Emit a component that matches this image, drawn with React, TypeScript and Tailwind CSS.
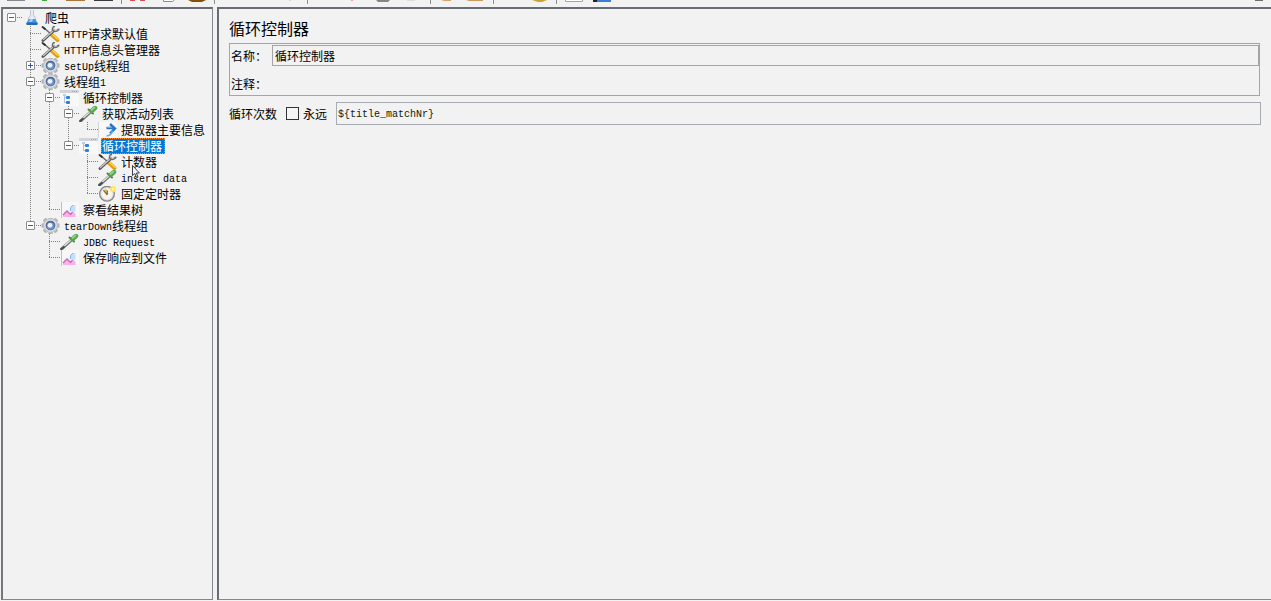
import React, { useState } from 'react';

type IconName = 'flask' | 'tools' | 'gear' | 'loop' | 'dropper' | 'arrow' | 'clock' | 'chart';

interface TreeNode {
  id: string;
  label: string;
  icon: IconName;
  collapsed?: boolean;
  children?: TreeNode[];
}

const plan: TreeNode = {
  id: 'plan',
  label: '爬虫',
  icon: 'flask',
  children: [
    { id: 'http-defaults', label: 'HTTP请求默认值', icon: 'tools' },
    { id: 'http-headers', label: 'HTTP信息头管理器', icon: 'tools' },
    { id: 'setup', label: 'setUp线程组', icon: 'gear', collapsed: true, children: [] },
    {
      id: 'threads',
      label: '线程组1',
      icon: 'gear',
      children: [
        {
          id: 'loop-outer',
          label: '循环控制器',
          icon: 'loop',
          children: [
            {
              id: 'activity',
              label: '获取活动列表',
              icon: 'dropper',
              children: [{ id: 'extract', label: '提取器主要信息', icon: 'arrow' }],
            },
            {
              id: 'loop-inner',
              label: '循环控制器',
              icon: 'loop',
              children: [
                { id: 'counter', label: '计数器', icon: 'tools' },
                { id: 'insert', label: 'insert data', icon: 'dropper' },
                { id: 'timer', label: '固定定时器', icon: 'clock' },
              ],
            },
          ],
        },
        { id: 'results', label: '察看结果树', icon: 'chart' },
      ],
    },
    {
      id: 'teardown',
      label: 'tearDown线程组',
      icon: 'gear',
      children: [
        { id: 'jdbc', label: 'JDBC Request', icon: 'dropper' },
        { id: 'save', label: '保存响应到文件', icon: 'chart' },
      ],
    },
  ],
};

const TreeIcon: React.FC<{ name: IconName }> = ({ name }) => {
  const teeth = [0, 45, 90, 135, 180, 225, 270, 315];
  return (
    <svg width="19" height="16" viewBox="0 0 19 16" className="shrink-0" aria-hidden="true">
      {name === 'flask' && (
        <g>
          <path d="M8 0h4v5l3.500 8q.5 2-1 2h-9q-1.500 0-1-2L8 5z" fill="#e4ebf2" />
          <path d="M8.500 0v5L6 9M11.500 0v5L14 9" fill="none" stroke="#b3c1ce" strokeWidth=".9" />
          <path d="M6.500 9h7l2 4.500q.3 1.500-1 1.500h-9q-1.300 0-1-1.500z" fill="#4a97e0" />
          <path d="M4.800 12.500h10.700v1q0 1.500-1 1.500h-9q-1.300 0-1-1.500z" fill="#1f69be" />
          <path d="M8 9h3l-1 3H7z" fill="#9dcaf4" />
        </g>
      )}
      {name === 'tools' && (
        <g fill="none" strokeLinecap="round">
          <path d="M2.500 1.500 10 8" stroke="#6c6c6c" strokeWidth="1.600" />
          <path d="M1.500 1l2.500 2" stroke="#333" strokeWidth="1.800" />
          <path d="M10.500 8.500 16.500 14" stroke="#dd9f10" strokeWidth="3.800" />
          <path d="M11.500 8.500 17 13.300" stroke="#ffd644" strokeWidth="1.500" />
          <path d="M2 14.500 13 4.500" stroke="#555" strokeWidth="2.800" />
          <path d="M2.500 13.500 12.500 4.500" stroke="#cdcdcd" strokeWidth="1.200" />
          <path d="M13 .5q-2 2-.8 4Q14.500 6.500 17.500 3.500" stroke="#6a6a6a" strokeWidth="2" />
          <path d="M13 1.500q-1 1.700 0 2.500 1.200.9 3 0" stroke="#dadada" strokeWidth=".9" />
        </g>
      )}
      {name === 'gear' && (
        <g>
          {teeth.map((a) => (
            <rect key={a} x="7.300" y="-1.500" width="4.400" height="4" rx="1" fill="#b2b5ba" transform={`rotate(${a} 9.5 7.5)`} />
          ))}
          <circle cx="9.500" cy="7.500" r="7.300" fill="#bfc2c7" />
          <circle cx="9.500" cy="7.500" r="6.300" fill="#dcdee2" />
          <circle cx="9.500" cy="7.500" r="4.800" fill="#4a6690" />
          <circle cx="9.500" cy="8" r="3.800" fill="#6b93c8" />
          <circle cx="9" cy="7.300" r="2.400" fill="#eef5fc" />
        </g>
      )}
      {name === 'loop' && (
        <g>
          <rect width="19" height="16" fill="#f8f8f9" />
          <rect width="19" height="3" fill="#d3d4d7" />
          <path d="M12 1.500h1M14 1.500h1M16 1.500h1" stroke="#a0a2a6" />
          <path d="M4.500 5v8M4.500 7.500h2M4.500 12.500h2" stroke="#a8c4e6" />
          <rect x="3" y="4" width="3" height="2" fill="#b4cfee" />
          <rect x="6" y="6" width="4" height="3" rx="1" fill="#2f80d6" />
          <rect x="6" y="11" width="4" height="3" rx="1" fill="#2f80d6" />
        </g>
      )}
      {name === 'dropper' && (
        <g strokeLinecap="round">
          <path d="M1.500 15 11 6.500" stroke="#6a706a" strokeWidth="3" />
          <path d="M3 13 10.500 6.500" stroke="#e2e7e2" strokeWidth="1.300" />
          <path d="M1.500 15 4 12.800" stroke="#4a4f4a" strokeWidth="1.800" />
          <path d="M9.500 3.500 14 7.500" stroke="#4d8146" strokeWidth="2" />
          <path d="M12.500 5 16 2" stroke="#5aa350" strokeWidth="4.500" />
          <path d="M12.500 4 15.500 1.500" stroke="#98d588" strokeWidth="1.700" />
        </g>
      )}
      {name === 'arrow' && (
        <g>
          <rect width="19" height="16" fill="#f8f8f9" />
          <path d="M.5 0v16" stroke="#d3d4d6" />
          <path d="M8.500 6h7M12 2 17 6.500 12 11.500" fill="none" stroke="#2277cc" strokeWidth="2.400" />
          <path d="M8.500 14q5-.5 6-5" fill="none" stroke="#74abe2" strokeWidth="1.500" />
          <path d="M8.500 5.500H14" stroke="#62a8e8" />
        </g>
      )}
      {name === 'clock' && (
        <g>
          <circle cx="9" cy="7.800" r="8" fill="#85858a" />
          <circle cx="9" cy="7.800" r="6.800" fill="#d8d7d3" />
          <circle cx="9" cy="7.800" r="5.700" fill="#f7f5ee" />
          <path d="M5 4 9.500 9 9 3z" fill="#e0c46a" />
          <path d="M9.300 8.800 5.500 4.300M9.300 8.800V4.500" stroke="#76683a" strokeWidth="1.200" />
          <circle cx="15" cy="3" r="2.900" fill="#ffe458" />
          <circle cx="15" cy="3" r="1.300" fill="#fff6b0" />
        </g>
      )}
      {name === 'chart' && (
        <g>
          <rect width="19" height="16" fill="#f7f7f8" />
          <path d="M1.500 0v16" stroke="#bdbec2" />
          <path d="M3 15v-3l4-3.500 3.500 3L13 9l2.500 3v3z" fill="#f6b4e6" />
          <path d="M3 13l4-4 3.500 3.500 2-2.500" fill="none" stroke="#d765ba" strokeWidth="1.500" />
          <path d="M10.500 9V5.500L13 3h2.500v7z" fill="#c3e0fa" />
          <path d="M10.500 9V5.500L13 3" fill="none" stroke="#7fb2e6" />
        </g>
      )}
    </svg>
  );
};

// Latin runs are set in a 6px wide mono face, half of a CJK character
const MixedText: React.FC<{ text: string }> = ({ text }) => (
  <>
    {text.split(/([\x20-\x7e]+)/).map((part, i) =>
      i % 2 === 1 ? (
        <span key={i} className="align-[1px] font-['Liberation_Mono',monospace] text-[10px] leading-none">
          {part}
        </span>
      ) : (
        part
      )
    )}
  </>
);

interface RowProps {
  node: TreeNode;
  guides: boolean[];
  isRoot?: boolean;
  isLast: boolean;
  selected: string;
  onSelect: (id: string) => void;
}

const TreeRow: React.FC<RowProps> = ({ node, guides, isRoot, isLast, selected, onSelect }) => {
  const [open, setOpen] = useState(!node.collapsed);
  const isSelected = selected === node.id;

  return (
    <li>
      <div className="flex h-4 items-center">
        {guides.map((line, i) => (
          <svg key={i} width="19" height="16" className="shrink-0" aria-hidden="true">
            {line && <path d="M9.500 0v16" stroke="#808080" strokeDasharray="1 1" />}
          </svg>
        ))}
        <span className="relative flex h-4 w-5 shrink-0 items-center pl-[5px]">
          <svg width="20" height="16" className="absolute left-0 top-0" aria-hidden="true">
            <path d="M9 7.500h11" stroke="#808080" strokeDasharray="1 1" />
            {!isRoot && <path d={isLast ? 'M9.500 0v8' : 'M9.500 0v16'} stroke="#808080" strokeDasharray="1 1" />}
          </svg>
          {node.children && (
            <button
              type="button"
              aria-label={open ? '折叠' : '展开'}
              onClick={() => setOpen(!open)}
              className="relative mb-px size-[9px] rounded-[1px] border border-[#8a8d92] bg-white"
            >
              <svg width="7" height="7" className="block">
                <path d={open ? 'M1 3.500h5' : 'M1 3.500h5M3.500 1v5'} stroke="#3c55a0" />
              </svg>
            </button>
          )}
        </span>
        <TreeIcon name={node.icon} />
        <button
          type="button"
          onClick={() => onSelect(node.id)}
          className={`ml-[3px] h-4 whitespace-nowrap border pr-[2px] leading-[14px] ${
            isSelected ? 'border-dotted border-[#ff8728] bg-[#0078d7] text-white' : 'border-transparent'
          }`}
        >
          <MixedText text={node.label} />
        </button>
      </div>
      {open && node.children && node.children.length > 0 && (
        <ul>
          {node.children.map((child, i) => (
            <TreeRow
              key={child.id}
              node={child}
              guides={[...guides, !isRoot && !isLast]}
              isLast={i === node.children!.length - 1}
              selected={selected}
              onSelect={onSelect}
            />
          ))}
        </ul>
      )}
    </li>
  );
};

// Each tool shows only the lower edge of its icon
const toolGroups: { name: string; art: React.ReactNode }[][] = [
  [
    { name: '新建', art: <path d="M7 0h18v1H7z" fill="#85888d" /> },
    { name: '模板', art: <path d="M12 0h5v1h-5z" fill="#3da63c" /> },
    { name: '打开', art: <path d="M6 0h19v1H6z" fill="#a87838" /> },
    { name: '保存', art: <path d="M4 0h19v1H4z" fill="#3b383b" /> },
  ],
  [
    { name: '剪切', art: <path d="M7 0h5v1H7zM17 0h5v1h-5z" fill="#d8505a" /> },
    { name: '复制', art: <path d="M10.500 0v1.500h9L21.500 0" fill="#fff" stroke="#8c8c8c" /> },
    { name: '粘贴', art: <path d="M5 0h18l-4 2H9z" fill="#845008" /> },
  ],
  [
    { name: '展开全部', art: null },
    { name: '折叠全部', art: null },
    { name: '切换', art: <path d="M13 0h2v1h-2z" fill="#d5d5d5" /> },
  ],
  [
    { name: '启动', art: null },
    { name: '不停顿启动', art: <path d="M12 0h2v1h-2z" fill="#e6a0b0" /> },
    { name: '停止', art: <path d="M7 0h14l-2 2H9z" fill="#858585" /> },
    { name: '关闭', art: <path d="M8 0h8v1H8z" fill="#dedede" /> },
  ],
  [
    { name: '清除', art: <path d="M9 0h10v1H12z" fill="#d5a468" /> },
    { name: '清除全部', art: <path d="M4 0h17v1H7z" fill="#cb995f" /> },
  ],
  [
    { name: '搜索', art: null },
    { name: '重置搜索', art: <path d="M7 0h15l-5 2h-4z" fill="#c6a437" /> },
  ],
  [
    { name: '函数助手', art: <path d="M7.500 0v1.500h17V0" fill="#fff" stroke="#a5a5a5" /> },
    {
      name: '帮助',
      art: (
        <>
          <path d="M8 0h15v2H6z" fill="#3c7dd8" />
          <path d="M5 0h4v2H5z" fill="#222" />
        </>
      ),
    },
  ],
];

const Toolbar: React.FC = () => (
  <div className="flex h-[7px] shrink-0 items-start">
    {toolGroups.map((group, g) => (
      <React.Fragment key={g}>
        {g > 0 && <span className="mx-px h-1 w-px bg-[#8f8f8f]" />}
        {group.map((tool) => (
          <button key={tool.name} type="button" aria-label={tool.name} className="h-[3px] w-[30px]">
            <svg width="30" height="3" className="block">
              {tool.art}
            </svg>
          </button>
        ))}
      </React.Fragment>
    ))}
    <span className="ml-auto mr-2 h-px w-2 bg-[#6d6d6d]" />
  </div>
);

const App: React.FC = () => {
  const [selected, setSelected] = useState('loop-inner');
  const [name, setName] = useState('循环控制器');
  const [comment, setComment] = useState('');
  const [forever, setForever] = useState(false);
  const [loops, setLoops] = useState('${title_matchNr}');

  return (
    <div className="flex h-screen flex-col overflow-hidden bg-[#f2f2f2] pb-px font-['Noto_Sans_CJK_SC',sans-serif] text-[12px] leading-4 text-black">
      <Toolbar />
      <div className="flex min-h-0 flex-1 gap-1 pl-px">
        <aside className="relative w-[212px] shrink-0 overflow-hidden border-b border-l-2 border-r border-t-2 border-[#828790] border-l-[#74777c] border-t-[#696c72]">
          <ul className="-ml-px pt-px">
            <TreeRow node={plan} guides={[]} isRoot isLast selected={selected} onSelect={setSelected} />
          </ul>
          {/* mouse pointer */}
          <svg width="10" height="15" viewBox="0 0 10 15" className="pointer-events-none absolute left-[129px] top-[156px]" aria-hidden="true">
            <path d="M.5.500v10l2.300-2 1.700 4 1.500-.6-1.600-3.900h3z" fill="#f7f7fa" stroke="#26263c" strokeWidth=".9" />
          </svg>
        </aside>

        <main className="min-w-0 flex-1 border-b border-l-2 border-t-2 border-[#828790] border-l-[#696c72] border-t-[#696c72] px-[10px] pt-2">
          <h1 className="mb-1 text-[16px] leading-[22px]">循环控制器</h1>
          <div className="mr-px border border-[#a5a5a5] py-px">
            <div className="flex items-center">
              <label htmlFor="name" className="w-[42px] shrink-0 pl-px">
                名称：
              </label>
              <input
                id="name"
                value={name}
                onChange={(e) => setName(e.target.value)}
                className="h-[21px] min-w-0 flex-1 border border-[#a5a5a5] px-[2px] outline-none"
              />
            </div>
            <div className="mt-[7px] flex items-center">
              <label htmlFor="comment" className="w-[42px] shrink-0 pl-px">
                注释：
              </label>
              <input
                id="comment"
                value={comment}
                onChange={(e) => setComment(e.target.value)}
                className="h-[21px] min-w-0 flex-1 px-[2px] outline-none"
              />
            </div>
          </div>
          <div className="mt-[6px] flex items-center">
            <label htmlFor="loops" className="w-[57px] shrink-0">
              循环次数
            </label>
            <input
              id="forever"
              type="checkbox"
              checked={forever}
              onChange={(e) => setForever(e.target.checked)}
              className="size-[13px] shrink-0 appearance-none border border-[#333] bg-[#f5f5f5] checked:bg-[#333]"
            />
            <label htmlFor="forever" className="w-[37px] shrink-0 pl-1">
              永远
            </label>
            <input
              id="loops"
              value={loops}
              onChange={(e) => setLoops(e.target.value)}
              className="h-[23px] min-w-0 flex-1 border border-[#a9abb3] px-px pt-px font-['Liberation_Mono',monospace] text-[10px] text-[#0a1c0a] outline-none"
            />
          </div>
        </main>
      </div>
    </div>
  );
};

export default App;
